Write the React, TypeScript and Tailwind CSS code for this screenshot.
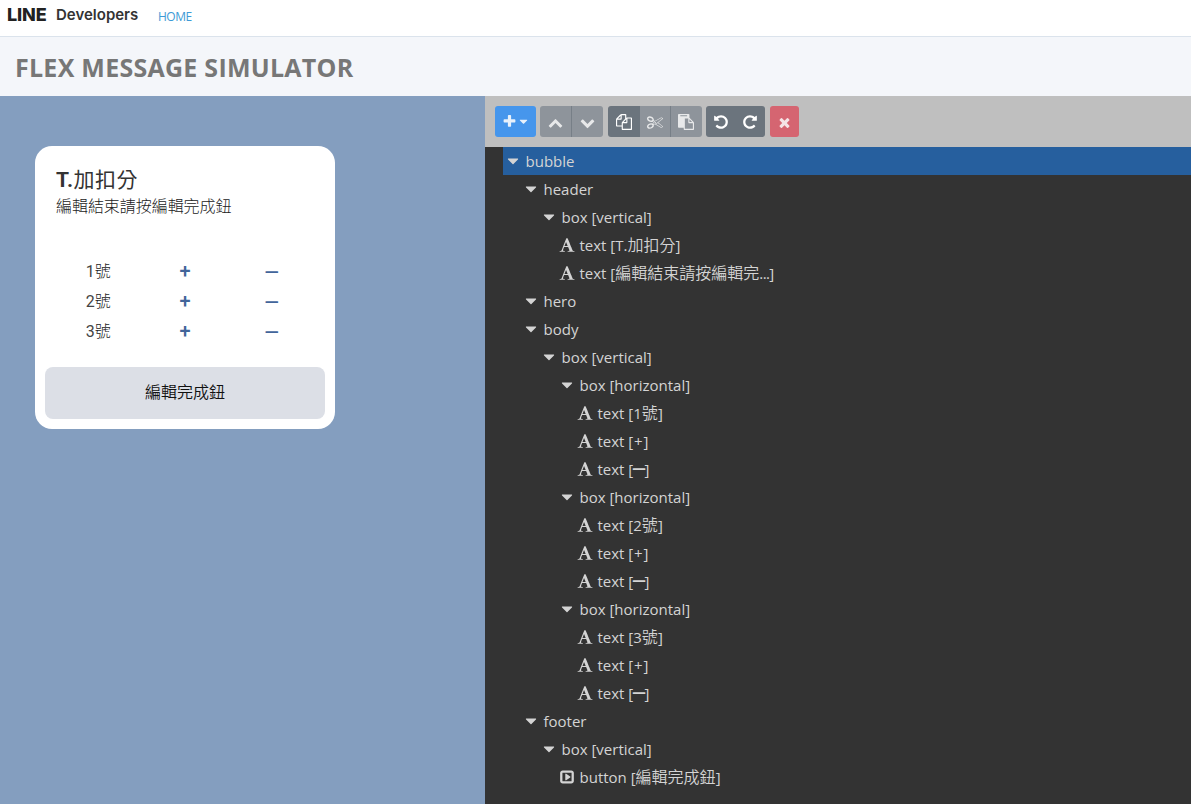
import React from "react";

const paths = {
  plus: "M1600 736v192q0 40-28 68t-68 28h-416v416q0 40-28 68t-68 28h-192q-40 0-68-28t-28-68v-416h-416q-40 0-68-28t-28-68v-192q0-40 28-68t68-28h416v-416q0-40 28-68t68-28h192q40 0 68 28t28 68v416h416q40 0 68 28t28 68z",
  up: "M1683 1331l-166 165q-19 19-45 19t-45-19l-531-531-531 531q-19 19-45 19t-45-19l-166-165q-19-19-19-45.5t19-45.5l742-741q19-19 45-19t45 19l742 741q19 19 19 45.5t-19 45.5z",
  down: "M1683 808l-742 741q-19 19-45 19t-45-19l-742-741q-19-19-19-45.5t19-45.5l166-165q19-19 45-19t45 19l531 531 531-531q19-19 45-19t45 19l166 165q19 19 19 45.5t-19 45.5z",
  copy: "M1696 384q40 0 68 28t28 68v1216q0 40-28 68t-68 28h-960q-40 0-68-28t-28-68v-288h-544q-40 0-68-28t-28-68v-672q0-40 20-88t48-76l408-408q28-28 76-48t88-20h416q40 0 68 28t28 68v328q68-40 128-40h416zm-544 213l-299 299h299v-299zm-640-384l-299 299h299v-299zm196 647l316-316v-416h-384v416q0 40-28 68t-68 28h-416v640h512v-256q0-40 20-88t48-76zm956 804v-1152h-384v416q0 40-28 68t-68 28h-416v640h896z",
  cut: "M960 896q26 0 45 19t19 45-19 45-45 19-45-19-19-45 19-45 45-19zm300 64l507 398q28 20 25 56-5 35-35 51l-128 64q-13 7-29 7-17 0-31-8l-690-387-110 66q-8 4-12 5 14 49 10 97-7 77-56 147.500t-132 123.500q-132 84-277 84-136 0-222-78-90-84-79-207 7-76 56-147t131-124q132-84 278-84 83 0 151 31 9-13 22-22l122-73-122-73q-13-9-22-22-68 31-151 31-146 0-278-84-82-53-131-124t-56-147q-5-59 15.500-113t63.500-93q85-79 222-79 145 0 277 84 83 52 132 123t56 148q4 48-10 97 4 1 12 5l110 66 690-387q14-8 31-8 16 0 29 7l128 64q30 16 35 51 3 36-25 56zm-681-260q46-42 21-108t-106-117q-92-59-192-59-74 0-113 36-46 42-21 108t106 117q92 59 192 59 74 0 113-36zm-85 745q81-51 106-117t-21-108q-39-36-113-36-100 0-192 59-81 51-106 117t21 108q39 36 113 36 100 0 192-59zm178-613l96 58v-11q0-36 33-56l14-8-79-47-26 26q-3 3-10 11t-12 12q-2 2-4 3.500t-3 2.500zm224 224l96 32 736-576-128-64-768 431v113l-160 96 9 8q2 2 7 6 4 4 11 12t11 12l26 26zm704 416l128-64-520-408-177 138q-2 3-13 7z",
  paste: "M768 1664h896v-640h-416q-40 0-68-28t-28-68v-416h-384v1152zm256-1440v-64q0-13-9.500-22.500t-22.500-9.500h-704q-13 0-22.500 9.500t-9.500 22.500v64q0 13 9.500 22.500t22.500 9.500h704q13 0 22.500-9.500t9.500-22.500zm256 672h299l-299-299v299zm512 128v672q0 40-28 68t-68 28h-960q-40 0-68-28t-28-68v-160h-544q-40 0-68-28t-28-68v-1344q0-40 28-68t68-28h1088q40 0 68 28t28 68v328q21 13 36 28l408 408q28 28 48 76t20 88z",
  redo: "M1664 256v448q0 26-19 45t-45 19h-448q-42 0-59-40-17-39 14-69l138-138q-148-137-349-137-104 0-198.500 40.500t-163.500 109.500-109.500 163.500-40.500 198.500 40.500 198.500 109.500 163.500 163.500 109.500 198.500 40.500q119 0 225-52t179-147q7-10 23-12 15 0 25 9l137 138q9 8 9.500 20.500t-7.500 22.500q-109 132-264 204.500t-327 72.500q-156 0-298-61t-245-164-164-245-61-298 61-298 164-245 245-164 298-61q147 0 284.500 55.500t244.500 156.500l130-129q29-31 70-14 39 17 39 59z",
  times: "M1490 1322q0 40-28 68l-136 136q-28 28-68 28t-68-28l-294-294-294 294q-28 28-68 28t-68-28l-136-136q-28-28-28-68t28-68l294-294-294-294q-28-28-28-68t28-68l136-136q28-28 68-28t68 28l294 294 294-294q28-28 68-28t68 28l136 136q28 28 28 68t-28 68l-294 294 294 294q28 28 28 68z",
  caret: "M1408 704q0 26-19 45l-448 448q-19 19-45 19t-45-19l-448-448q-19-19-19-45t19-45 45-19h896q26 0 45 19t19 45z",
  font: "M789 559l-170 450q33 0 136.500 2t160.500 2q19 0 57-2-87-253-184-452zm-725 1105l2-79q23-7 56-12.500t57-10.500 49.500-14.500 44.500-29 31-50.500l237-616 280-724h128q8 14 11 21l205 480q33 78 106 257.500t114 274.500q15 34 58 144.500t72 168.500q20 45 35 57 19 15 88 29.500t84 20.500q6 38 6 57 0 4-.5 13t-.5 13q-63 0-190-8t-191-8q-76 0-215 7t-178 8q0-43 4-78l131-28q1 0 12.500-2.500t15.500-3.500 14.500-4.500 15-6.500 11-8 9-11 2.500-14q0-16-31-96.500t-72-177.500-42-100l-450-2q-26 58-76.500 195.500t-50.500 162.500q0 22 14 37.500t43.500 24.500 48.500 13.500 57 8.500 41 4q1 19 1 58 0 9-2 27-58 0-174.500-10t-174.500-10q-8 0-26.500 4t-21.500 4q-80 14-188 14z",
  button: "M1280 896q0 33-27 52l-448 320q-31 22-66 5-35-18-35-57v-640q0-39 35-57 35-17 66 5l448 320q27 19 27 52zm128 448v-896q0-14-9-23t-23-9h-960q-14 0-23 9t-9 23v896q0 14 9 23t23 9h960q14 0 23-9t9-23zm256-896v896q0 119-84.500 203.500t-203.500 84.500h-960q-119 0-203.500-84.500t-84.500-203.500v-896q0-119 84.500-203.500t203.500-84.500h960q119 0 203.500 84.500t84.500 203.500z",
};

type IconName = keyof typeof paths;

function Icon({ name, className = "size-4" }: { name: IconName; className?: string }) {
  return (
    <svg viewBox="0 0 1792 1792" fill="currentColor" className={`shrink-0 ${className}`}>
      <path d={paths[name]} />
    </svg>
  );
}

function Dash({ className }: { className: string }) {
  return <span className={`inline-block font-['DejaVu_Sans',sans-serif] text-[20px] leading-none font-bold ${className}`}>─</span>;
}

type Node = { depth: number; icon?: IconName; kind: string; arg?: string; cjk?: string; tail?: string };

const box = (depth: number, kind: string): Node => ({ depth, kind });
const text = (depth: number, arg: string, cjk = "", tail = ""): Node => ({
  depth, icon: "font", kind: "text", arg, cjk, tail,
});

const nodes: Node[] = [
  box(0, "bubble"),
  box(1, "header"),
  box(2, "box [vertical]"),
  text(3, "T.", "加扣分"),
  text(3, "", "編輯結束請按編輯完", "..."),
  box(1, "hero"),
  box(1, "body"),
  box(2, "box [vertical]"),
  ...["1", "2", "3"].flatMap((n) => [
    box(3, "box [horizontal]"),
    text(4, n, "號"),
    text(4, "+"),
    text(4, "─"),
  ]),
  box(1, "footer"),
  box(2, "box [vertical]"),
  { depth: 3, icon: "button", kind: "button", arg: "", cjk: "編輯完成鈕", tail: "" },
];

function Row({ node, selected }: { node: Node; selected: boolean }) {
  return (
    <li style={{ paddingLeft: node.depth * 18 }} className={`flex h-7 items-center ${selected ? "bg-[#265f9e]" : ""}`}>
      <span className="flex w-5 shrink-0 justify-center">
        <Icon name={node.icon ?? "caret"} className={node.icon ? "size-4" : "size-[18px]"} />
      </span>
      <span className="ml-[2.5px] whitespace-pre leading-7">
        {node.kind}
        {node.arg !== undefined && (
          <>
            {" ["}
            {node.arg === "─" ? (
              <Dash className="-mx-[0.4px] translate-y-px" />
            ) : (
              <span className={node.arg === "+" ? "px-[0.8px]" : ""}>{node.arg}</span>
            )}
            {node.cjk && <span className="text-[16px] font-[350]">{node.cjk}</span>}
            {node.tail && <span className="tracking-[-0.6px]">{node.tail}</span>}]
          </>
        )}
      </span>
    </li>
  );
}

function ToolButton({ className, children }: { className: string; children: React.ReactNode }) {
  return <button className={`flex h-[31px] items-center justify-center ${className}`}>{children}</button>;
}

export default function App() {
  return (
    <div className="flex h-[804px] w-[1191px] flex-col overflow-hidden bg-white font-['Open_Sans','Noto_Sans_CJK_TC',sans-serif]">
      <header className="flex h-[37px] shrink-0 items-start border-b border-[#dbe3ec] pl-[7px]">
        <span className="mt-[3px] w-[49px] font-['Inter',sans-serif] text-[18px] leading-6 font-extrabold tracking-[-0.1px] text-[#222]">LINE</span>
        <span className="mt-[3px] w-[102px] font-['Inter',sans-serif] text-[15px] leading-6 font-semibold text-[#333]">Developers</span>
        <a className="mt-[5px] text-[12px] leading-6 tracking-[-0.5px] text-[#3d9ad6]">HOME</a>
      </header>
      <div className="flex h-[59px] shrink-0 items-center bg-[#f4f6fa] pt-px pl-[15px]">
        <h1 className="text-[25px] leading-8 font-bold tracking-[0.26px] whitespace-nowrap text-[#777]">FLEX MESSAGE SIMULATOR</h1>
      </div>
      <div className="flex min-h-0 flex-1">
        <section className="w-[485px] shrink-0 bg-[#849ebf] px-[35px] pt-[50px]">
          <div className="flex h-[283px] w-[300px] flex-col rounded-[17px] bg-white px-[10px] pt-[19px] pb-[10px] font-['Roboto','Noto_Sans_CJK_TC',sans-serif] text-[16px] text-[#222]">
            <div className="pl-[11px] text-[21px] leading-[30px] tracking-[0.5px] text-[#333]"><span className="font-bold">T.</span>加扣分</div>
            <div className="pl-[11px] leading-[23px] font-light tracking-[-0.05px]">編輯結束請按編輯完成鈕</div>
            <div className="mt-[38px] flex flex-col px-[10px]">
              {["1", "2", "3"].map((label) => (
                <div key={label} className="grid h-[30px] grid-cols-3 items-center text-center font-light">
                  <span className="pt-0.5"><span className="font-normal text-[#444]">{label}</span>號</span>
                  <span className="text-[20px] font-medium text-[#42659a]">+</span>
                  <span className="text-[#42659a]"><Dash className="translate-y-[3px]" /></span>
                </div>
              ))}
            </div>
            <button className="mt-auto h-[52px] rounded-lg bg-[#dcdfe6] font-[350] text-[#111]">編輯完成鈕</button>
          </div>
        </section>
        <section className="flex min-w-0 flex-1 flex-col bg-[#333]">
          <div className="flex h-[51px] shrink-0 items-start bg-[#bfbfbf] pt-[10px] pl-[10px] text-white">
            <ToolButton className="mr-1 w-[41px] rounded-[3px] bg-[#4696ec] text-[#e8f1fb]">
              <Icon name="plus" className="size-[15px]" />
              <Icon name="caret" className="size-[13px]" />
            </ToolButton>
            <div className="mr-[5px] flex text-[#e8e9ea]">
              <ToolButton className="w-8 rounded-l-[3px] border-r border-[#777f87] bg-[#8e949b] pt-0.5"><Icon name="up" className="size-[15px]" /></ToolButton>
              <ToolButton className="w-[31px] rounded-r-[3px] bg-[#8e949b] pt-px"><Icon name="down" className="size-[15px]" /></ToolButton>
            </div>
            <div className="mr-1 flex text-[#e8e9ea]">
              <ToolButton className="w-8 rounded-l-[3px] bg-[#6b747d] text-white"><Icon name="copy" /></ToolButton>
              <ToolButton className="w-[31px] border-r border-[#777f87] bg-[#8e949b]"><Icon name="cut" /></ToolButton>
              <ToolButton className="w-[31px] rounded-r-[3px] bg-[#8e949b] pr-px"><Icon name="paste" /></ToolButton>
            </div>
            <div className="mr-[5px] flex rounded-[3px] bg-[#6b747d]">
              <ToolButton className="w-[30px]"><Icon name="redo" className="size-4 -scale-x-100" /></ToolButton>
              <ToolButton className="w-[29px] pr-px"><Icon name="redo" /></ToolButton>
            </div>
            <ToolButton className="w-[29px] rounded-[3px] bg-[#d56571] pt-0.5 pr-px text-[#f4e4e6]"><Icon name="times" className="size-[15px]" /></ToolButton>
          </div>
          <ul className="pl-[18px] text-[15px] text-[#d4d4d4]">
            {nodes.map((node, i) => <Row key={i} node={node} selected={i === 0} />)}
          </ul>
        </section>
      </div>
    </div>
  );
}
